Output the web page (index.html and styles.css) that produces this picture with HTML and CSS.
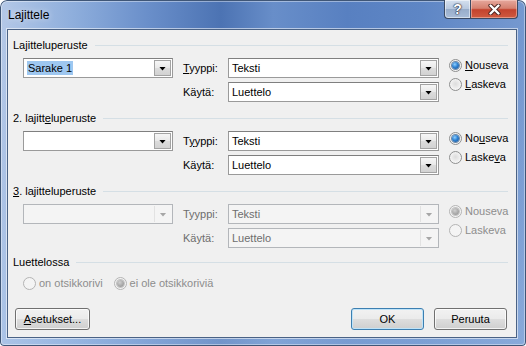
FILE: index.html
```html
<!DOCTYPE html>
<html lang="fi">
<head>
  <meta charset="UTF-8">
  <title>Lajittele</title>
  <link rel="stylesheet" href="styles.css">
</head>
<body>
  <div class="window">
    <div class="titlebar">
      <span class="caption">Lajittele</span>
      <div class="caption-buttons">
        <span class="cap-btn help">?</span>
        <span class="cap-btn close">
          <svg width="13" height="11" viewBox="0 0 13 11">
            <path d="M2.5 1.5 L10.5 9.5 M10.5 1.5 L2.5 9.5" stroke="#4a2320" stroke-width="4.2" stroke-linecap="round"/>
            <path d="M2.5 1.5 L10.5 9.5 M10.5 1.5 L2.5 9.5" stroke="#fff" stroke-width="2.4" stroke-linecap="round"/>
          </svg>
        </span>
      </div>
    </div>

    <div class="client">
      <!-- first sort key -->
      <section class="group">
        <div class="group-head"><span>La<u>j</u>itteluperuste</span></div>
        <div class="criteria">
          <div class="combo field"><span class="value"><span class="selected">Sarake 1</span></span><span class="drop"></span></div>
          <span class="lbl row1"><u>T</u>yyppi:</span>
          <div class="combo row1"><span class="value">Teksti</span><span class="drop"></span></div>
          <div class="order">
            <span class="radio"><span class="dot checked"></span><span><u>N</u>ouseva</span></span>
            <span class="radio"><span class="dot"></span><span><u>L</u>askeva</span></span>
          </div>
          <span class="lbl row2">Käytä:</span>
          <div class="combo row2"><span class="value">Luettelo</span><span class="drop"></span></div>
        </div>
      </section>

      <!-- second sort key -->
      <section class="group">
        <div class="group-head"><span>2. lajitt<u>e</u>luperuste</span></div>
        <div class="criteria">
          <div class="combo field"><span class="value"></span><span class="drop"></span></div>
          <span class="lbl row1">T<u>y</u>yppi:</span>
          <div class="combo row1"><span class="value">Teksti</span><span class="drop"></span></div>
          <div class="order">
            <span class="radio"><span class="dot checked"></span><span>No<u>u</u>seva</span></span>
            <span class="radio"><span class="dot"></span><span>Laske<u>v</u>a</span></span>
          </div>
          <span class="lbl row2">Käytä:</span>
          <div class="combo row2"><span class="value">Luettelo</span><span class="drop"></span></div>
        </div>
      </section>

      <!-- third sort key, disabled -->
      <section class="group last">
        <div class="group-head"><span><u>3</u>. lajitteluperuste</span></div>
        <div class="criteria disabled">
          <div class="combo field"><span class="value"></span><span class="drop"></span></div>
          <span class="lbl row1">Tyyppi:</span>
          <div class="combo row1"><span class="value">Teksti</span><span class="drop"></span></div>
          <div class="order">
            <span class="radio"><span class="dot checked"></span><span>Nouseva</span></span>
            <span class="radio"><span class="dot"></span><span>Laskeva</span></span>
          </div>
          <span class="lbl row2">Käytä:</span>
          <div class="combo row2"><span class="value">Luettelo</span><span class="drop"></span></div>
        </div>
      </section>

      <section class="group list">
        <div class="group-head"><span>Luettelossa</span></div>
        <div class="header-row disabled">
          <span class="radio"><span class="dot"></span><span>on otsikkorivi</span></span>
          <span class="radio"><span class="dot checked"></span><span>ei ole otsikkoriviä</span></span>
        </div>
      </section>

      <div class="actions">
        <button class="btn options"><u>A</u>setukset...</button>
        <button class="btn ok default">OK</button>
        <button class="btn">Peruuta</button>
      </div>
    </div>
  </div>
</body>
</html>
```

FILE: styles.css
```css
body {
  margin: 0;
  font-family: "Liberation Sans", Arial, sans-serif;
  font-size: 11px;
  color: #000;
  background: #fff;
}
.window {
  width: 526px;
  height: 346px;
  box-sizing: border-box;
  display: flex;
  flex-direction: column;
  border-radius: 7px 7px 4px 4px;
  background:
    linear-gradient(180deg, rgba(255,255,255,0) 0px, rgba(255,255,255,0) 40px, rgba(150,180,225,0.25) 200px, rgba(160,190,230,0.45) 346px),
    linear-gradient(90deg, #b4c8e7 0%, #8eaedc 14%, #6a8fca 28%, #4c73b3 42%, #688ec9 52%, #5880c1 66%, #5e86c5 80%, #7699d0 100%);
  box-shadow: inset 0 0 0 1px #3f5677, inset 0 0 0 2px rgba(255,255,255,0.4);
}
.titlebar {
  height: 29px;
  flex: none;
  display: flex;
  align-items: center;
  padding: 0 8px;
}
.caption {
  font-size: 12px;
  padding-top: 1px;
  text-shadow: 0 0 6px rgba(255,255,255,0.7);
}
.caption-buttons {
  margin-left: auto;
  align-self: flex-start;
  display: flex;
}
.cap-btn {
  height: 19px;
  box-sizing: border-box;
  display: flex;
  align-items: center;
  justify-content: center;
  border: 1px solid #3b4a63;
  border-top: none;
}
.help {
  width: 26px;
  border-right: none;
  border-radius: 0 0 0 4px;
  background: linear-gradient(180deg, #d5e0ef 0%, #b9c9df 48%, #98adca 52%, #a9bdd8 100%);
  box-shadow: inset 0 0 0 1px rgba(255,255,255,0.5);
  color: #fff;
  font-weight: bold;
  font-size: 14px;
  text-shadow: 0 0 1px #223, 0 0 1px #223, 0 0 2px #334;
}
.close {
  width: 48px;
  border-radius: 0 0 4px 0;
  background: linear-gradient(180deg, #e6a89d 0%, #d5806f 46%, #c3432e 54%, #cf5a40 100%);
  box-shadow: inset 0 0 0 1px rgba(255,220,210,0.45);
}
.client {
  width: 510px;
  height: 309px;
  margin-left: 7px;
  box-sizing: border-box;
  border: 1px solid #4a6285;
  box-shadow: 0 0 0 1px rgba(255,255,255,0.55);
  background: #f0f0f0;
  padding: 9px 8px 7px 5px;
  display: flex;
  flex-direction: column;
}
.group {
  margin-bottom: 10px;
}
.group.last {
  margin-bottom: 8px;
}
.group.list {
  margin-bottom: 0;
}
.group-head {
  height: 13px;
  line-height: 13px;
  display: flex;
  align-items: center;
}
.group-head::after {
  content: "";
  flex: 1;
  height: 1px;
  margin-left: 7px;
  background: #d5dfe5;
}
.criteria {
  margin: 6px 0 0 10px;
  display: grid;
  grid-template-columns: 150px 55px 211px 1fr;
  grid-template-rows: 20px 20px;
  row-gap: 4px;
}
.field {
  grid-column: 1;
  grid-row: 1;
}
.lbl {
  grid-column: 2;
  padding-left: 10px;
  line-height: 20px;
}
.combo.row1, .combo.row2 {
  grid-column: 3;
}
.row1 { grid-row: 1; }
.row2 { grid-row: 2; }
.order {
  grid-column: 4;
  grid-row: 1 / span 2;
  align-self: start;
  padding: 1px 0 0 10px;
  display: flex;
  flex-direction: column;
  gap: 6px;
}
.combo {
  box-sizing: border-box;
  height: 20px;
  display: flex;
  background: #fff;
  border: 1px solid #9a9a9a;
  border-top-color: #7f7f7f;
}
.combo .value {
  flex: 1;
  line-height: 18px;
  padding-left: 3px;
  white-space: nowrap;
}
.selected {
  background: #9ec7f0;
  padding: 1px 1px;
}
.drop {
  width: 17px;
  margin: 1px;
  box-sizing: border-box;
  border: 1px solid #a3a3a3;
  background: linear-gradient(180deg, #f6f6f6 0%, #e9e9e9 50%, #dcdcdc 51%, #d2d2d2 100%);
  display: flex;
  align-items: center;
  justify-content: center;
}
.drop::after {
  content: "";
  width: 7px;
  height: 4px;
  margin-top: 1px;
  background: #000;
  clip-path: polygon(0 0, 100% 0, 50% 100%);
}
.radio {
  height: 13px;
  display: flex;
  align-items: center;
  gap: 3px;
  line-height: 13px;
  white-space: nowrap;
}
.dot {
  width: 13px;
  height: 13px;
  box-sizing: border-box;
  border-radius: 50%;
  border: 1px solid #8e8f8f;
  background: radial-gradient(circle at 50% 45%, #dcdcdc 0%, #ececec 45%, #fafafa 80%);
  display: flex;
  align-items: center;
  justify-content: center;
}
.dot.checked::after {
  content: "";
  width: 7px;
  height: 7px;
  border-radius: 50%;
  background: radial-gradient(circle at 40% 35%, #8fd0ff 0%, #2f82d2 45%, #174d8d 100%);
  box-shadow: 0 0 0 1px rgba(25,70,120,0.6);
}
.disabled .combo {
  background: #f4f4f4;
  border-color: #b3b6ba;
}
.disabled .combo .value,
.disabled .lbl {
  color: #6d6d6d;
}
.disabled .drop {
  border: none;
  border-left: 1px solid #e2e2e2;
  background: none;
}
.disabled .drop::after {
  background: #a6a6a6;
}
.disabled .radio {
  color: #8d8d8d;
}
.disabled .dot {
  border-color: #b4b4b4;
  background: #f4f4f4;
}
.disabled .dot.checked::after {
  background: radial-gradient(circle at 40% 35%, #d0d0d0 0%, #a6a6a6 60%, #8c8c8c 100%);
  box-shadow: 0 0 0 1px rgba(120,120,120,0.4);
}
.header-row {
  margin: 8px 0 0 10px;
  display: flex;
  gap: 11px;
}
.actions {
  margin-top: 18px;
  padding: 0 1px 0 2px;
  display: flex;
  gap: 10px;
}
.btn {
  height: 22px;
  width: 73px;
  padding: 0;
  font: inherit;
  color: #000;
  border: 1px solid #707070;
  border-radius: 3px;
  background: linear-gradient(180deg, #f2f2f2 0%, #ebebeb 48%, #dddddd 52%, #cfcfcf 100%);
  box-shadow: inset 0 0 0 1px rgba(255,255,255,0.75);
}
.btn.options {
  width: 75px;
  margin-right: auto;
}
.btn.default {
  border-color: #3c7fb1;
  box-shadow: inset 0 0 0 1px #bfe3f8;
}
```
